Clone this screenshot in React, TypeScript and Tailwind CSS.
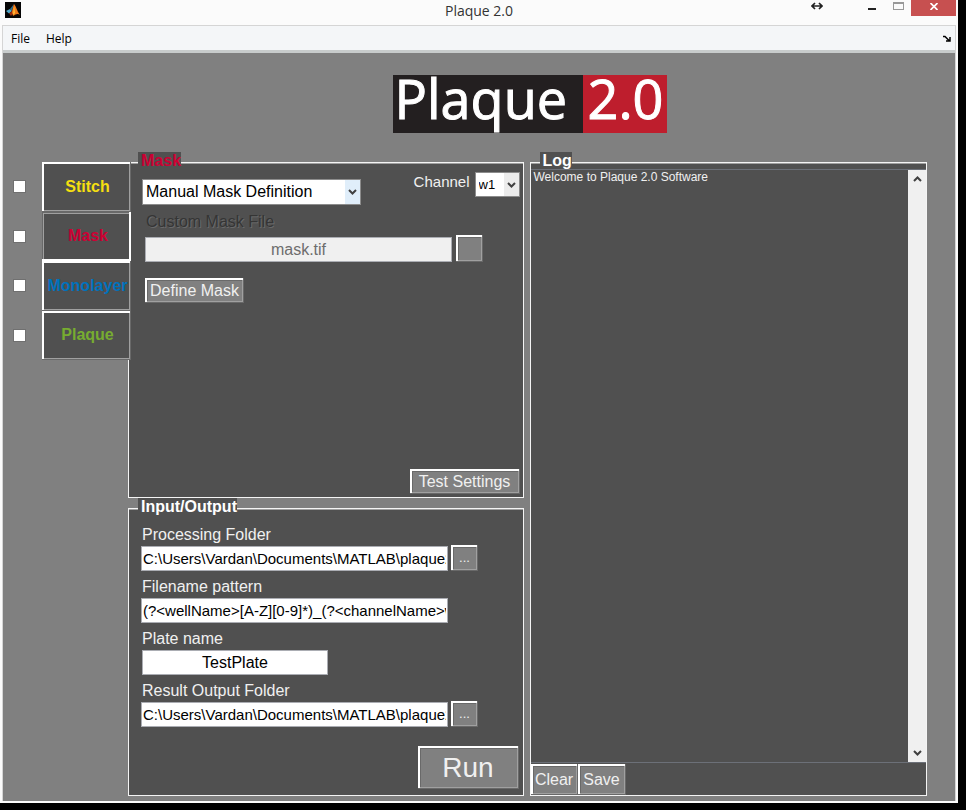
import type { ReactNode } from "react";

const bevel =
  "bg-[#808080] text-[#f0f0f0] shadow-[inset_-1px_-1px_0_#696969,inset_2px_2px_0_#ffffff,inset_-2px_-2px_0_#a0a0a0,inset_3px_3px_0_#696969]";
const field =
  "h-[25px] border border-[#abadb3] bg-white px-px leading-[22px] text-black outline-none";

function Chevron({ up = false }: { up?: boolean }) {
  return (
    <svg width="9" height="6" viewBox="0 0 9 6" fill="none" stroke="#404040" strokeWidth="2" aria-hidden="true">
      <path d={up ? "M1 5 4.500 1.500 8 5" : "M1 1 4.500 4.500 8 1"} />
    </svg>
  );
}

function Picker({ id, value, box, arrow }: { id: string; value: string; box: string; arrow: string }) {
  return (
    <div className={`relative border border-[#8c8c8c] bg-white ${box}`}>
      <select id={id} aria-label={id} className="h-full w-full appearance-none bg-transparent pl-[3px] text-black outline-none">
        <option>{value}</option>
      </select>
      <span className={`pointer-events-none absolute inset-y-0 right-0 flex w-[15px] items-center justify-center ${arrow}`}>
        <Chevron />
      </span>
    </div>
  );
}

function Panel({ title, titleColor, className, children }: { title: string; titleColor: string; className: string; children: ReactNode }) {
  return (
    <section className={`relative flex flex-col border border-[#f4f4f4] bg-[#505050] shadow-[inset_0_1px_0_#a0a0a0] ${className}`}>
      <h2 className={`absolute -top-[11px] left-[9px] bg-[#505050] pl-[3px] text-base leading-[17px] font-bold ${titleColor}`}>{title}</h2>
      {children}
    </section>
  );
}

const tabs = [
  { name: "Stitch", color: "text-[#f5df10]", selected: false },
  { name: "Mask", color: "text-[#cc0033]", selected: true },
  { name: "Monolayer", color: "text-[#0072bd]", selected: false },
  { name: "Plaque", color: "text-[#77ac30]", selected: false },
];

const path = "C:\\Users\\Vardan\\Documents\\MATLAB\\plaque2.0";

const fields = [
  { id: "processing", label: "Processing Folder", value: path, browse: true, box: "w-[307px] text-[15px]" },
  { id: "pattern", label: "Filename pattern", value: "(?<wellName>[A-Z][0-9]*)_(?<channelName>w[0-9]*)", browse: false, box: "w-[307px] text-[15px]" },
  { id: "plate", label: "Plate name", value: "TestPlate", browse: false, box: "ml-px w-[186px] text-center text-base" },
  { id: "output", label: "Result Output Folder", value: path, browse: true, box: "w-[307px] text-[15px]" },
];

export default function App() {
  return (
    <div className="flex min-h-screen flex-col bg-black pr-2 pb-[7px] font-['Liberation_Sans',Arial,sans-serif]">
      <div className="flex flex-1 flex-col bg-[#fbfbfb] px-[2px] pb-[2px]">
        <header className="relative flex h-[25px] items-start justify-center font-['Open_Sans','Noto_Sans',sans-serif]">
          <svg className="absolute top-[2px] left-[3px]" width="16" height="16" viewBox="0 0 16 16" aria-hidden="true">
            <path fill="#050505" d="M0 0h16v16H0z" />
            <path fill="#4fa6c8" d="M1 9 5 7l2 2-3 2.500z" />
            <path fill="#286f8d" d="m5 7 4-5-2 7z" />
            <path fill="#9c2c0c" d="M4 11.500 7 9l2-7 1 7-4 5z" />
            <path fill="#f07a18" d="M9 2c2 2 3 7 6 11-2-2-4-1-7 1l-1-4z" />
            <path fill="#ffc33b" d="m9 4 1 7-2 2z" />
          </svg>
          <h1 className="text-sm leading-[21px] text-[#333333]">Plaque 2.0</h1>
          <div className="absolute top-0 right-0 flex h-4 items-start">
            <svg className="mt-[2px] mr-[45px]" width="12" height="8" viewBox="0 0 12 8" aria-hidden="true">
              <path d="M4 1 1 4l3 3M8 1l3 3-3 3M1 4h10" fill="none" stroke="#222" strokeWidth="1.700" />
            </svg>
            <button aria-label="Minimize" className="mr-[17px] h-[10px] w-2 border-b-2 border-[#222222]" />
            <button aria-label="Maximize" className="mt-[2px] mr-[7px] h-2 w-[11px] border border-t-2 border-[#999999]" />
            <button aria-label="Close" className="flex h-4 w-[45px] items-center justify-center bg-[#c75050] pb-1">
              <svg width="8" height="7" viewBox="0 0 8 7" aria-hidden="true">
                <path d="M.5 0 7.500 7M7.500 0 .5 7" stroke="#fff" strokeWidth="1.700" />
              </svg>
            </button>
          </div>
        </header>

        <div className="flex flex-1 flex-col border-x border-t border-[#d5d5d5]">
          <nav className="flex h-[27px] items-center gap-4 border-b-[3px] border-[#c8cccc] bg-[#f4f6f8] pt-px pl-2 font-['Open_Sans','Noto_Sans',sans-serif] text-xs text-black">
            <button>File</button>
            <button>Help</button>
            <svg className="mr-1 ml-auto" width="8" height="7" viewBox="0 0 8 7" fill="none" stroke="#000" strokeWidth="1.500" aria-hidden="true">
              <path d="M0 1.500h2l4 4M7 2v4H3" />
            </svg>
          </nav>

          <main className="flex flex-1 flex-col bg-[#808080] pt-[22px] pr-7 pb-[5px]">
            <div className="ml-[129px] flex h-[58px] justify-center font-['Open_Sans','Noto_Sans',sans-serif] text-[54px] leading-[47px] text-white [-webkit-text-stroke:1px_#ffffff]">
              <span className="w-[190px] bg-[#231f20] pl-[2px]">Plaque</span>
              <span className="w-[84px] bg-[#be1e2d] pl-[5px]">2.0</span>
            </div>

            <div className="mt-[29px] flex flex-1">
              <div className="z-10 -mr-[3px] grid h-[198px] w-[128px] shrink-0 auto-rows-fr">
                {tabs.map((t) => (
                  <div key={t.name} className="flex items-center pl-[10px]">
                    <input
                      type="checkbox"
                      aria-label={`Run ${t.name}`}
                      className="mr-4 size-[13px] shrink-0 appearance-none border border-[#707070] bg-white"
                    />
                    <button
                      className={`h-full flex-1 bg-[#505050] text-base font-bold ${t.color} ${
                        t.selected
                          ? "pl-[3px] shadow-[inset_-2px_-2px_0_#ffffff,inset_1px_1px_0_#696969,inset_2px_2px_0_#a0a0a0]"
                          : "pl-[2px] shadow-[inset_-1px_-1px_0_#696969,inset_2px_2px_0_#ffffff,inset_-2px_-2px_0_#a0a0a0]"
                      }`}
                    >
                      {t.name}
                    </button>
                  </div>
                ))}
              </div>

              <div className="flex min-w-0 flex-1 flex-col gap-[10px]">
                <Panel title="Mask" titleColor="text-[#cc0033]" className="flex-1 pt-[9px] pr-[3px] pb-[3px] pl-[13px]">
                  <div className="flex items-start">
                    <div className="pt-[7px]">
                      <Picker id="Mask method" value="Manual Mask Definition" box="h-[26px] w-[219px] text-base" arrow="bg-[#e0eefa]" />
                    </div>
                    <label htmlFor="Channel" className="mr-[5px] ml-auto text-[15px] leading-5 text-[#f0f0f0]">Channel</label>
                    <Picker id="Channel" value="w1" box="h-[25px] w-[45px] text-[13px]" arrow="bg-[#ececec]" />
                  </div>
                  <label htmlFor="maskfile" className="mt-[7px] ml-1 text-base leading-5 text-[#353535] [text-shadow:1px_1px_0_#6a6a6a]">
                    Custom Mask File
                  </label>
                  <div className="mt-[3px] ml-[3px] flex items-end gap-1">
                    <input id="maskfile" disabled defaultValue="mask.tif" className="h-[25px] w-[307px] border border-[#abadb3] bg-[#f0f0f0] text-center text-base text-[#6d6d6d]" />
                    <button aria-label="Browse mask file" className={`h-[27px] w-[27px] ${bevel}`} />
                  </div>
                  <button className={`mt-4 ml-[3px] h-[25px] w-[99px] text-base ${bevel}`}>Define Mask</button>
                  <button className={`mt-auto h-[25px] w-[110px] self-end text-base ${bevel}`}>Test Settings</button>
                </Panel>

                <Panel title="Input/Output" titleColor="text-white" className="pt-4 pr-[4px] pb-[6px] pl-3">
                  <div className="flex flex-col gap-[6px]">
                    {fields.map((f) => (
                      <div key={f.id}>
                        <label htmlFor={f.id} className="block pl-px text-base leading-5 text-[#f0f0f0]">{f.label}</label>
                        <div className="flex h-[26px] items-end gap-[3px]">
                          <input id={f.id} defaultValue={f.value} className={`${field} ${f.box}`} />
                          {f.browse && (
                            <button aria-label={`Browse ${f.label}`} className={`h-[26px] w-[27px] text-[13px] ${bevel}`}>...</button>
                          )}
                        </div>
                      </div>
                    ))}
                  </div>
                  <button className={`mt-[19px] h-[43px] w-[101px] self-end text-[28px] leading-8 ${bevel}`}>Run</button>
                </Panel>
              </div>

              <Panel title="Log" titleColor="text-white" className="ml-[6px] min-w-0 flex-1 pt-[6px]">
                <div className="flex flex-1 border-y border-[#6c7078]">
                  <textarea
                    readOnly
                    aria-label="Log"
                    defaultValue="Welcome to Plaque 2.0 Software"
                    className="min-w-0 flex-1 resize-none overflow-hidden bg-[#505050] pl-[3px] text-xs leading-[14px] text-[#f0f0f0] outline-none"
                  />
                  <div className="flex w-[18px] flex-col items-center justify-between bg-[#f0f0f0] py-[6px]">
                    <button aria-label="Scroll up"><Chevron up /></button>
                    <button aria-label="Scroll down"><Chevron /></button>
                  </div>
                </div>
                <div className="flex pt-px">
                  <button className={`h-[31px] w-[47px] text-base ${bevel}`}>Clear</button>
                  <button className={`h-[31px] w-[48px] text-base ${bevel}`}>Save</button>
                </div>
              </Panel>
            </div>
          </main>
        </div>
      </div>
    </div>
  );
}
